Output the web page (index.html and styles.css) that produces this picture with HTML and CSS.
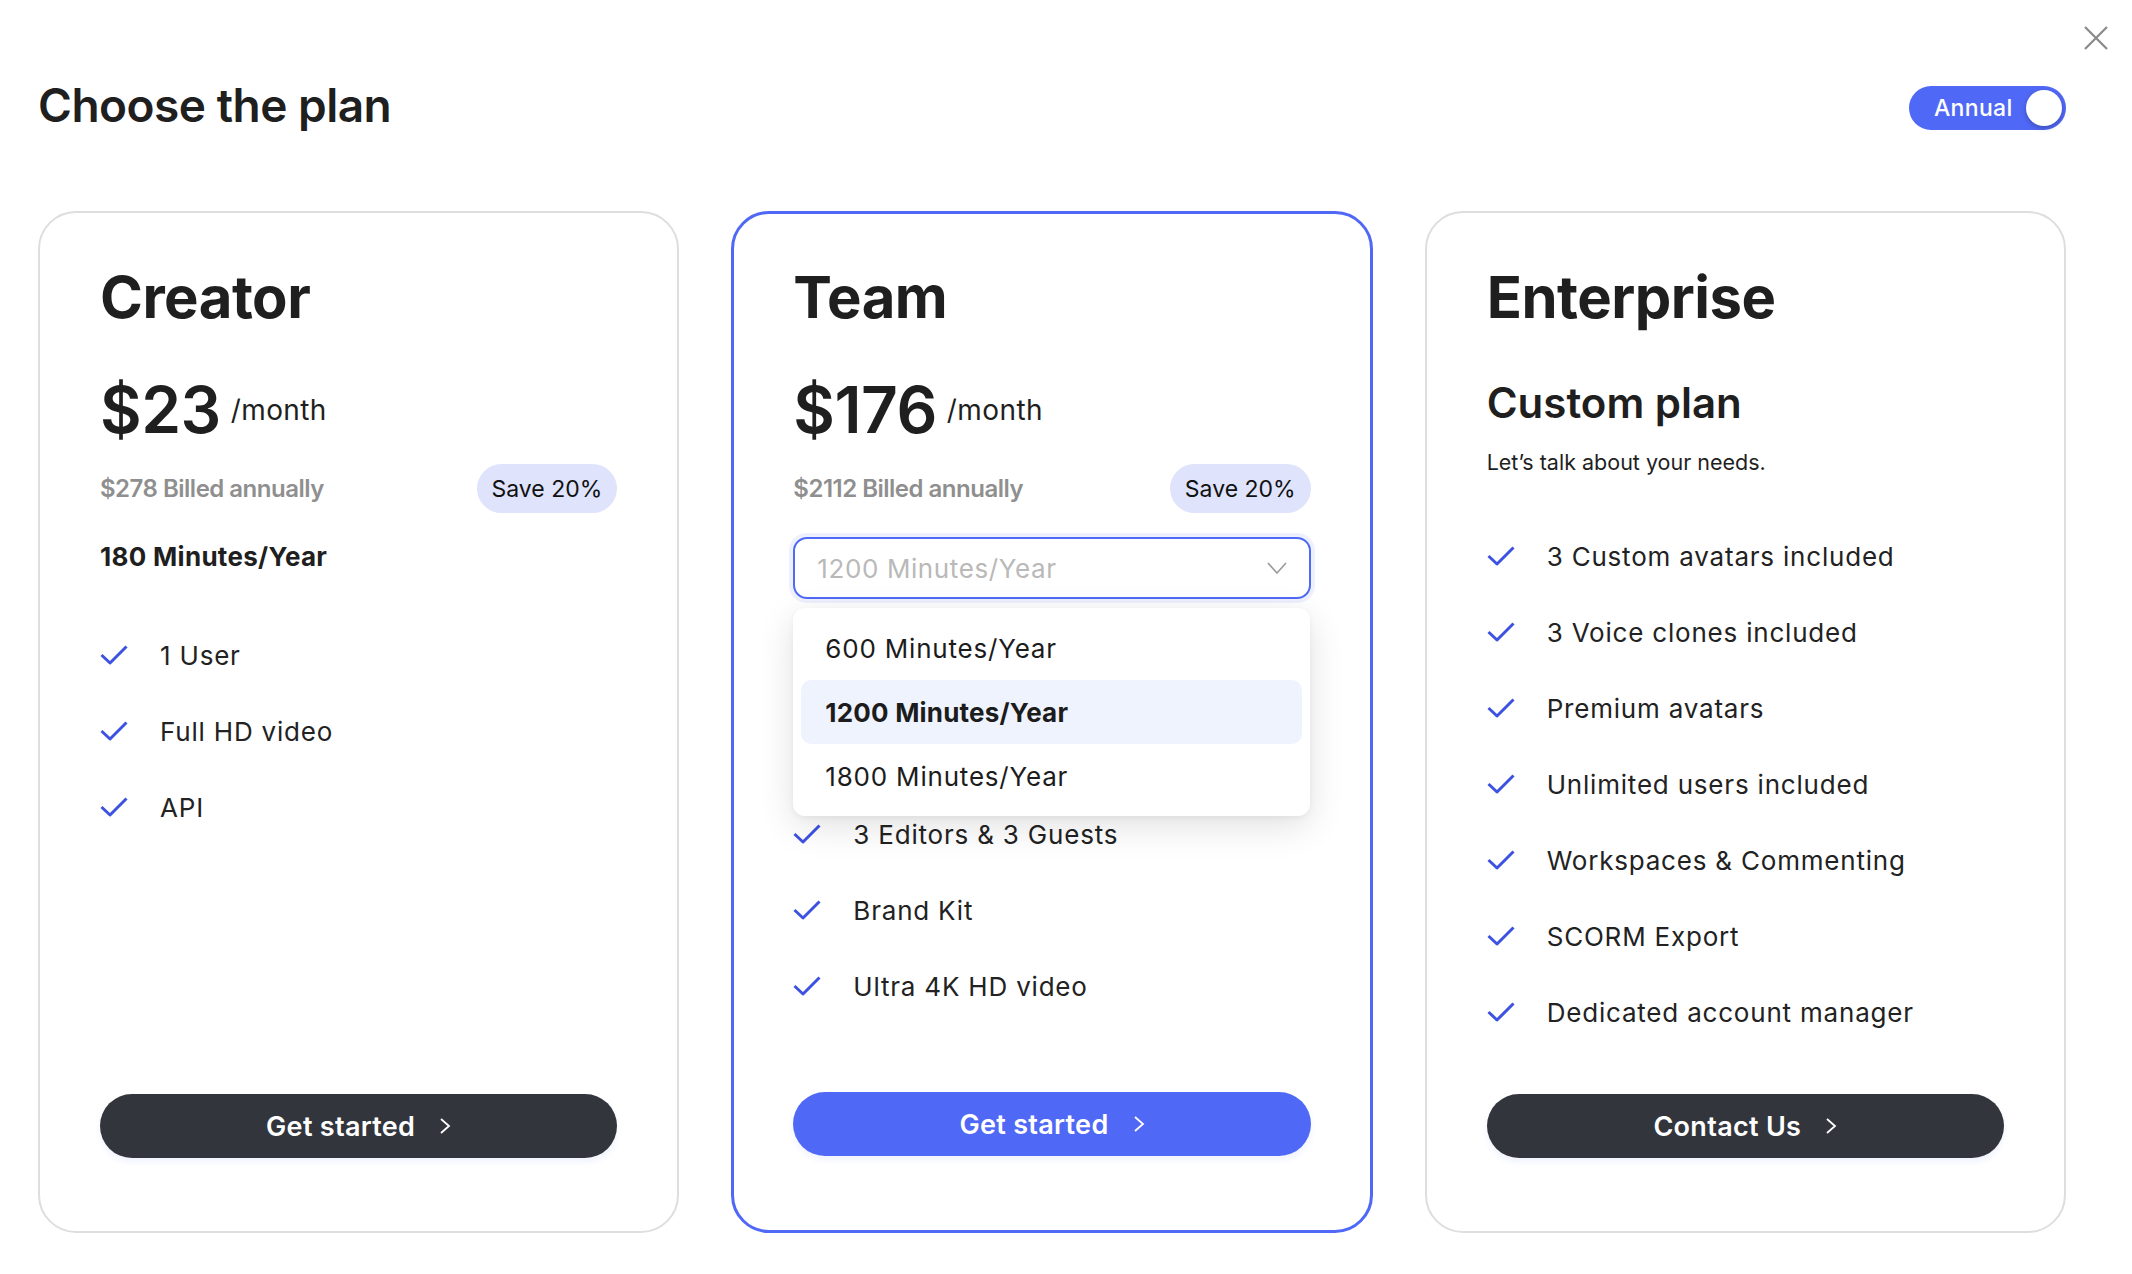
FILE: index.html
```html
<!DOCTYPE html>
<html lang="en">
<head>
    <meta charset="UTF-8">
    <meta name="viewport" content="width=device-width, initial-scale=1.0">
    <title>Choose the plan</title>
    <link rel="stylesheet" href="styles.css">
</head>
<body>
    <div class="page">
        <button class="close-btn" aria-label="Close">
            <svg width="24" height="24" viewBox="0 0 24 24"><path d="M1 1L23 23M23 1L1 23" stroke="#8a8a8a" stroke-width="2.2" fill="none"/></svg>
        </button>

        <div class="top">
            <h1 class="title">Choose the plan</h1>
            <div class="toggle">
                <span class="toggle-label">Annual</span>
                <span class="knob"></span>
            </div>
        </div>

        <div class="plans">
            <!-- creator -->
            <div class="card">
                <h2 class="plan-name">Creator</h2>
                <div class="price"><span class="amount">$23</span><span class="per">/month</span></div>
                <div class="billed"><span>$278 Billed annually</span><span class="save">Save 20%</span></div>
                <div class="minutes">180 Minutes/Year</div>
                <ul class="features">
                    <li><svg class="check" viewBox="0 0 28 20"><polyline points="1.5,10 10,18 26.5,1.5"/></svg>1 User</li>
                    <li><svg class="check" viewBox="0 0 28 20"><polyline points="1.5,10 10,18 26.5,1.5"/></svg>Full HD video</li>
                    <li><svg class="check" viewBox="0 0 28 20"><polyline points="1.5,10 10,18 26.5,1.5"/></svg>API</li>
                </ul>
                <button class="cta dark">Get started <svg class="arrow" viewBox="0 0 12 18"><polyline points="2,2 10,9 2,16"/></svg></button>
            </div>

            <!-- team -->
            <div class="card active">
                <h2 class="plan-name">Team</h2>
                <div class="price"><span class="amount">$176</span><span class="per">/month</span></div>
                <div class="billed"><span>$2112 Billed annually</span><span class="save">Save 20%</span></div>
                <div class="select">
                    <span class="placeholder">1200 Minutes/Year</span>
                    <svg class="caret" viewBox="0 0 20 12"><polyline points="1,1 10,11 19,1"/></svg>
                </div>
                <div class="menu">
                    <div class="option">600 Minutes/Year</div>
                    <div class="option selected">1200 Minutes/Year</div>
                    <div class="option">1800 Minutes/Year</div>
                </div>
                <ul class="features team">
                    <li><svg class="check" viewBox="0 0 28 20"><polyline points="1.5,10 10,18 26.5,1.5"/></svg>3 Editors &amp; 3 Guests</li>
                    <li><svg class="check" viewBox="0 0 28 20"><polyline points="1.5,10 10,18 26.5,1.5"/></svg>Brand Kit</li>
                    <li><svg class="check" viewBox="0 0 28 20"><polyline points="1.5,10 10,18 26.5,1.5"/></svg>Ultra 4K HD video</li>
                </ul>
                <button class="cta blue">Get started <svg class="arrow" viewBox="0 0 12 18"><polyline points="2,2 10,9 2,16"/></svg></button>
            </div>

            <!-- enterprise -->
            <div class="card">
                <h2 class="plan-name">Enterprise</h2>
                <div class="custom">Custom plan</div>
                <p class="talk">Let’s talk about your needs.</p>
                <ul class="features ent">
                    <li><svg class="check" viewBox="0 0 28 20"><polyline points="1.5,10 10,18 26.5,1.5"/></svg>3 Custom avatars included</li>
                    <li><svg class="check" viewBox="0 0 28 20"><polyline points="1.5,10 10,18 26.5,1.5"/></svg>3 Voice clones included</li>
                    <li><svg class="check" viewBox="0 0 28 20"><polyline points="1.5,10 10,18 26.5,1.5"/></svg>Premium avatars</li>
                    <li><svg class="check" viewBox="0 0 28 20"><polyline points="1.5,10 10,18 26.5,1.5"/></svg>Unlimited users included</li>
                    <li><svg class="check" viewBox="0 0 28 20"><polyline points="1.5,10 10,18 26.5,1.5"/></svg>Workspaces &amp; Commenting</li>
                    <li><svg class="check" viewBox="0 0 28 20"><polyline points="1.5,10 10,18 26.5,1.5"/></svg>SCORM Export</li>
                    <li><svg class="check" viewBox="0 0 28 20"><polyline points="1.5,10 10,18 26.5,1.5"/></svg>Dedicated account manager</li>
                </ul>
                <button class="cta dark">Contact Us <svg class="arrow" viewBox="0 0 12 18"><polyline points="2,2 10,9 2,16"/></svg></button>
            </div>
        </div>
    </div>
</body>
</html>
```

FILE: styles.css
```css
body {
    margin: 0;
    background: #fff;
    color: #1f1f1f;
    font-family: Inter, 'Liberation Sans', sans-serif;
}

.page {
    position: relative;
    padding: 77px 66px 0 38px;
}

.close-btn {
    position: absolute;
    top: 26px;
    right: 24px;
    width: 24px;
    height: 24px;
    padding: 0;
    border: none;
    background: none;
    cursor: pointer;
}
.close-btn svg {
    display: block;
}

.top {
    display: flex;
    justify-content: space-between;
    align-items: center;
    height: 56px;
}

.title {
    margin: 0;
    font-size: 46px;
    line-height: 56px;
    font-weight: 600;
    letter-spacing: -0.5px;
}

.toggle {
    display: flex;
    align-items: center;
    justify-content: space-between;
    width: 157px;
    height: 44px;
    margin-top: 6px;
    padding: 0 4px 0 25px;
    box-sizing: border-box;
    border-radius: 22px;
    background: #5068f6;
    color: #fff;
    font-size: 23px;
    font-weight: 500;
    letter-spacing: 0.3px;
}
.knob {
    width: 36px;
    height: 36px;
    border-radius: 50%;
    background: #fff;
    box-shadow: 0 2px 5px rgba(0, 0, 0, 0.25);
}

.plans {
    display: grid;
    grid-template-columns: repeat(3, 1fr);
    gap: 52px;
    margin-top: 78px;
}

.card {
    display: flex;
    flex-direction: column;
    padding: 55px 60px 73px;
    border: 2px solid #dedede;
    border-radius: 38px;
}
.card.active {
    border: 3px solid #5068f6;
    padding: 54px 59px 74px;
}

.plan-name {
    margin: 0;
    font-size: 58px;
    line-height: 58px;
    font-weight: 700;
    letter-spacing: -0.5px;
}

.price {
    display: flex;
    align-items: center;
    gap: 10px;
    height: 64px;
    margin-top: 52px;
}
.amount {
    font-size: 64px;
    line-height: 64px;
    font-weight: 600;
    letter-spacing: -0.5px;
}
.per {
    font-size: 28px;
    line-height: 34px;
    letter-spacing: 0.4px;
}

.billed {
    display: flex;
    justify-content: space-between;
    align-items: center;
    height: 49px;
    margin-top: 22px;
    color: #8f8f8f;
    font-size: 24px;
    font-weight: 600;
    letter-spacing: -0.5px;
}
.save {
    display: flex;
    align-items: center;
    height: 49px;
    padding: 0 15px;
    border-radius: 25px;
    background: #dfe3fc;
    color: #111;
    font-size: 23px;
    font-weight: 400;
    letter-spacing: 0;
}

.minutes {
    margin-top: 29px;
    font-size: 26px;
    line-height: 30px;
    font-weight: 700;
    letter-spacing: 0.3px;
}

.features {
    display: flex;
    flex-direction: column;
    gap: 40px;
    margin: 65px 0 64px;
    padding: 0;
    list-style: none;
}
.features.team {
    margin-top: 0;
}
.features.ent {
    margin-top: 62px;
}
.features li {
    display: flex;
    align-items: center;
    gap: 32px;
    height: 36px;
    font-size: 26px;
    letter-spacing: 0.8px;
    color: #222;
}
.check {
    width: 28px;
    height: 20px;
    flex-shrink: 0;
    fill: none;
    stroke: #3d52e0;
    stroke-width: 3;
    stroke-linejoin: round;
}

.custom {
    margin-top: 55px;
    font-size: 42px;
    line-height: 44px;
    font-weight: 600;
}
.talk {
    margin: 23px 0 0;
    font-size: 21.5px;
    line-height: 28px;
}

/* minutes picker, shown open */
.select {
    display: flex;
    justify-content: space-between;
    align-items: center;
    height: 62px;
    margin-top: 24px;
    padding: 0 22px;
    box-sizing: border-box;
    border: 2px solid #4f6af5;
    border-radius: 14px;
    box-shadow: 0 0 0 4px #eef0fe;
    background: #fff;
}
.placeholder {
    color: #b9b9b9;
    font-size: 26px;
    letter-spacing: 0.6px;
}
.caret {
    width: 20px;
    height: 12px;
    fill: none;
    stroke: #9a9a9a;
    stroke-width: 1.6;
}
.menu {
    position: relative;
    z-index: 2;
    margin: 9px 1px 0 0;
    padding: 8px;
    border-radius: 12px;
    background: #fff;
    box-shadow: 0 10px 36px rgba(0, 0, 0, 0.12), 0 2px 6px rgba(0, 0, 0, 0.05);
}
.option {
    display: flex;
    align-items: center;
    height: 64px;
    padding: 0 24px;
    border-radius: 10px;
    font-size: 26px;
    letter-spacing: 0.8px;
    color: #1c1c1c;
}
.option.selected {
    background: #eff3fd;
    font-weight: 700;
    letter-spacing: 0.2px;
}

.cta {
    display: flex;
    align-items: center;
    justify-content: center;
    gap: 24px;
    height: 64px;
    margin-top: auto;
    border: none;
    border-radius: 32px;
    color: #fff;
    font-family: inherit;
    font-size: 27px;
    font-weight: 600;
    letter-spacing: 0.3px;
    cursor: pointer;
    box-shadow: 0 4px 6px rgba(80, 104, 246, 0.08);
}
.cta.dark {
    background: #33353d;
}
.cta.blue {
    background: #5068f6;
}
.arrow {
    width: 12px;
    height: 18px;
    fill: none;
    stroke: #fff;
    stroke-width: 1.8;
}
```
